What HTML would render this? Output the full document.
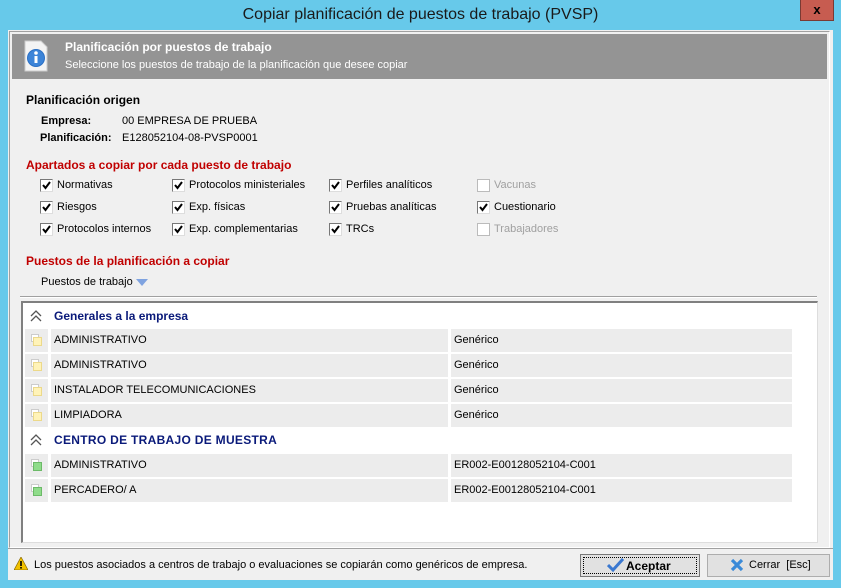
<!DOCTYPE html>
<html><head><meta charset="utf-8"><style>
*{margin:0;padding:0;box-sizing:border-box}
body{width:841px;height:588px;overflow:hidden;background:#67c9ea;font-family:"Liberation Sans",sans-serif;font-size:11px;color:#000;position:relative}
.a{position:absolute;white-space:nowrap}
.cb{position:absolute;width:13px;height:13px;background:#fff;border:1px solid #777;border-right-color:#ddd;border-bottom-color:#ddd}
.cb svg{position:absolute;left:1px;top:1px}
.cb.d{border-color:#bbb}
.row{position:absolute;height:23px;background:#ececec;line-height:23px;padding-left:3px}
</style></head><body>
<div class="a" style="left:0;top:0;width:841px;height:30px;line-height:30px;text-align:center;font-size:16px;color:#1a1a1a">Copiar planificación de puestos de trabajo (PVSP)</div>
<div class="a" style="left:800px;top:0;width:34px;height:21px;background:#c75c50;border:1px solid #7a3a33;border-top:0;text-align:center;line-height:20px;font-weight:bold;font-size:13px">x</div>
<div class="a" style="left:8px;top:30px;width:825px;height:550px;background:#f0f0f0"></div>
<div class="a" style="left:9px;top:31px;width:821px;height:517px;border:1px solid #a0a0a0;border-right-color:#fff;border-bottom-color:#fff"></div>
<div class="a" style="left:12px;top:34px;width:815px;height:45px;background:#949494"></div>
<svg class="a" style="left:23px;top:40px" width="26" height="32" viewBox="0 0 26 32"><path d="M2 1h16l6 6v24H2z" fill="#f4f4f4" stroke="#ccc"/><circle cx="13" cy="18" r="9" fill="#2a6fc4"/><circle cx="13" cy="18" r="8" fill="#3c84d8"/><rect x="11.5" y="16" width="3" height="7" fill="#fff"/><circle cx="13" cy="13" r="1.8" fill="#fff"/></svg>
<div class="a" style="left:65px;top:40px;color:#fff;font-weight:bold;font-size:12px">Planificación por puestos de trabajo</div>
<div class="a" style="left:65px;top:59px;color:#fff">Seleccione los puestos de trabajo de la planificación que desee copiar</div>
<div class="a" style="left:26px;top:93px;font-weight:bold;font-size:12px">Planificación origen</div>
<div class="a" style="left:41px;top:115px;font-weight:bold">Empresa:</div>
<div class="a" style="left:122px;top:115px">00 EMPRESA DE PRUEBA</div>
<div class="a" style="left:40px;top:132px;font-weight:bold">Planificación:</div>
<div class="a" style="left:122px;top:132px">E128052104-08-PVSP0001</div>
<div class="a" style="left:26px;top:158px;font-weight:bold;font-size:12px;color:#c00000">Apartados a copiar por cada puesto de trabajo</div>

<div class="cb" style="left:40px;top:179px"><svg width="9" height="9"><path d="M1 4l2.5 3L8 1" stroke="#000" stroke-width="2" fill="none"/></svg></div><div class="a" style="left:57px;top:179px">Normativas</div>
<div class="cb" style="left:40px;top:201px"><svg width="9" height="9"><path d="M1 4l2.5 3L8 1" stroke="#000" stroke-width="2" fill="none"/></svg></div><div class="a" style="left:57px;top:201px">Riesgos</div>
<div class="cb" style="left:40px;top:223px"><svg width="9" height="9"><path d="M1 4l2.5 3L8 1" stroke="#000" stroke-width="2" fill="none"/></svg></div><div class="a" style="left:57px;top:223px">Protocolos internos</div>
<div class="cb" style="left:172px;top:179px"><svg width="9" height="9"><path d="M1 4l2.5 3L8 1" stroke="#000" stroke-width="2" fill="none"/></svg></div><div class="a" style="left:189px;top:179px">Protocolos ministeriales</div>
<div class="cb" style="left:172px;top:201px"><svg width="9" height="9"><path d="M1 4l2.5 3L8 1" stroke="#000" stroke-width="2" fill="none"/></svg></div><div class="a" style="left:189px;top:201px">Exp. físicas</div>
<div class="cb" style="left:172px;top:223px"><svg width="9" height="9"><path d="M1 4l2.5 3L8 1" stroke="#000" stroke-width="2" fill="none"/></svg></div><div class="a" style="left:189px;top:223px">Exp. complementarias</div>
<div class="cb" style="left:329px;top:179px"><svg width="9" height="9"><path d="M1 4l2.5 3L8 1" stroke="#000" stroke-width="2" fill="none"/></svg></div><div class="a" style="left:346px;top:179px">Perfiles analíticos</div>
<div class="cb" style="left:329px;top:201px"><svg width="9" height="9"><path d="M1 4l2.5 3L8 1" stroke="#000" stroke-width="2" fill="none"/></svg></div><div class="a" style="left:346px;top:201px">Pruebas analíticas</div>
<div class="cb" style="left:329px;top:223px"><svg width="9" height="9"><path d="M1 4l2.5 3L8 1" stroke="#000" stroke-width="2" fill="none"/></svg></div><div class="a" style="left:346px;top:223px">TRCs</div>
<div class="cb d" style="left:477px;top:179px"></div><div class="a" style="left:494px;top:179px;color:#a0a0a0">Vacunas</div>
<div class="cb" style="left:477px;top:201px"><svg width="9" height="9"><path d="M1 4l2.5 3L8 1" stroke="#000" stroke-width="2" fill="none"/></svg></div><div class="a" style="left:494px;top:201px">Cuestionario</div>
<div class="cb d" style="left:477px;top:223px"></div><div class="a" style="left:494px;top:223px;color:#a0a0a0">Trabajadores</div>

<div class="a" style="left:26px;top:254px;font-weight:bold;font-size:12px;color:#c00000">Puestos de la planificación a copiar</div>
<div class="a" style="left:41px;top:276px">Puestos de trabajo</div>
<svg class="a" style="left:136px;top:279px" width="12" height="7"><path d="M0 0h12L6 7z" fill="#7fa3e0"/></svg>
<div class="a" style="left:20px;top:296px;width:797px;height:2px;border-top:1px solid #a0a0a0;border-bottom:1px solid #fff"></div>
<div class="a" style="left:21px;top:301px;width:797px;height:242px;background:#fff;border:2px solid #808080;border-right:1px solid #ddd;border-bottom:1px solid #ddd"></div>

<svg class="a" style="left:30px;top:310px" width="12" height="12"><path d="M1 6l5-5 5 5M1 11l5-5 5 5" stroke="#555" stroke-width="1.3" fill="none"/></svg>
<div class="a" style="left:54px;top:309px;font-weight:bold;font-size:12px;color:#0a1a7a">Generales a la empresa</div>
<svg class="a" style="left:30px;top:434px" width="12" height="12"><path d="M1 6l5-5 5 5M1 11l5-5 5 5" stroke="#555" stroke-width="1.3" fill="none"/></svg>
<div class="a" style="left:54px;top:433px;font-weight:bold;font-size:12px;color:#0a1a7a;letter-spacing:.3px">CENTRO DE TRABAJO DE MUESTRA</div>

<div id="rows"></div>
<div class="a" style="left:8px;top:548px;width:825px;height:1px;background:#a0a0a0"></div>
<svg class="a" style="left:14px;top:557px" width="14" height="13"><path d="M7 0L14 13H0z" fill="#f2c200" stroke="#8a6a00" stroke-width=".7"/><rect x="6.2" y="4" width="1.6" height="5" fill="#000"/><rect x="6.2" y="10" width="1.6" height="1.6" fill="#000"/></svg>
<div class="a" style="left:34px;top:559px">Los puestos asociados a centros de trabajo o evaluaciones se copiarán como genéricos de empresa.</div>
<div class="a" style="left:580px;top:554px;width:120px;height:23px;background:#e1e1e1;border:1px solid #777"><div style="position:absolute;left:2px;top:2px;right:2px;bottom:2px;border:1px dotted #000"></div></div>
<svg class="a" style="left:607px;top:558px" width="17" height="14"><path d="M1 7l5 5L16 1" stroke="#3a78d0" stroke-width="3" fill="none"/></svg>
<div class="a" style="left:626px;top:559px;font-weight:bold;font-size:12px">Aceptar</div>
<div class="a" style="left:707px;top:554px;width:123px;height:23px;background:#e1e1e1;border:1px solid #adadad"></div>
<svg class="a" style="left:730px;top:558px" width="14" height="14"><path d="M2 2l10 10M12 2L2 12" stroke="#3a8ad8" stroke-width="3.2"/></svg>
<div class="a" style="left:749px;top:559px">Cerrar&nbsp; [Esc]</div>
<script>
var r=[[329,'ADMINISTRATIVO','Genérico',0],[354,'ADMINISTRATIVO','Genérico',0],[379,'INSTALADOR TELECOMUNICACIONES','Genérico',0],[404,'LIMPIADORA','Genérico',0],[454,'ADMINISTRATIVO','ER002-E00128052104-C001',1],[479,'PERCADERO/ A','ER002-E00128052104-C001',1]];
var h='';r.forEach(function(x){var c=x[3]?'#8fdc8a':'#fff3b8',s=x[3]?'#6cba68':'#ecd98a';
h+='<div class="row" style="left:25px;top:'+x[0]+'px;width:23px"></div><div class="a" style="left:31px;top:'+(x[0]+5)+'px;width:8px;height:8px;border:1px solid #ccc;background:#fff"></div><div class="a" style="left:33px;top:'+(x[0]+8)+'px;width:9px;height:9px;background:'+c+';border:1px solid '+s+'"></div>';
h+='<div class="row" style="left:51px;top:'+x[0]+'px;width:397px">'+x[1]+'</div><div class="row" style="left:451px;top:'+x[0]+'px;width:341px">'+x[2]+'</div>';});
document.getElementById('rows').innerHTML=h;
</script>
</body></html>
